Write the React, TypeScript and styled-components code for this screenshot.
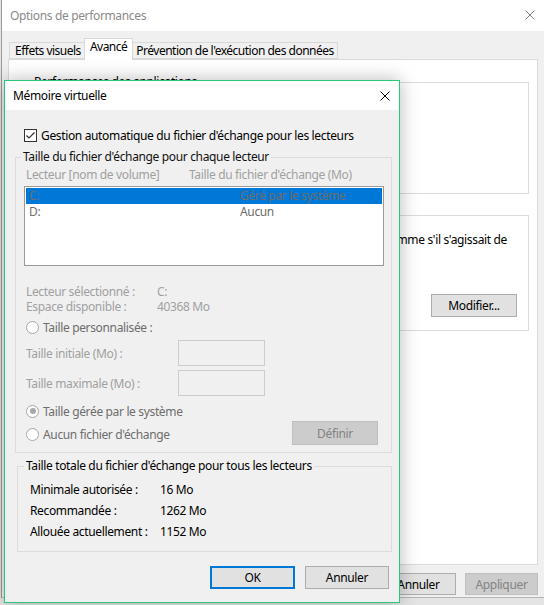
import styled, {createGlobalStyle} from "styled-components";

const GlobalStyle = createGlobalStyle`
    html, body {
        margin: 0;
        padding: 0;
    }
    body {
        width: 544px;
        height: 605px;
        overflow: hidden;
        background: #e4e4e4;
        font-family: "Noto Sans", "Open Sans", sans-serif;
        font-size: 12px;
        letter-spacing: -0.35px;
        color: #000;
    }
`;

const CloseIcon = ({color}: {color: string}) => (
    <svg width="10" height="10" viewBox="0 0 10 10">
        <path d="M0.5 0.5 L9.5 9.5 M9.5 0.5 L0.5 9.5" stroke={color} strokeWidth="1" fill="none"/>
    </svg>
);

const App = () => {
    return (
        <Screen>
            <GlobalStyle/>
            <PerfWindow>
                <WinTitle>
                    <span>Options de performances</span>
                    <CloseIcon color="#808080"/>
                </WinTitle>
                <WinBody>
                    <TabStrip>
                        <Tab>Effets visuels</Tab>
                        <Tab $active>Avancé</Tab>
                        <Tab>Prévention de l'exécution des données</Tab>
                    </TabStrip>
                    <TabPanel>
                        <BgGroup $h={120}>
                            <legend>Performances des applications</legend>
                            <BgText>Ajuster pour obtenir les meilleures performances de :</BgText>
                        </BgGroup>
                        <BgGroup $h={124} $top={13}>
                            <legend>Mémoire virtuelle</legend>
                            <BgLine>
                                <span>Une zone de fichier d'échange est une zone du disque dur que Windows utilise comme s'il s'agissait de</span>
                            </BgLine>
                            <BgText>RAM.</BgText>
                            <BgFoot>
                                <span>Taille totale du fichier d'échange pour tous les lecteurs : 1152 Mo</span>
                                <WinButton $w={86} $h={23}>Modifier...</WinButton>
                            </BgFoot>
                        </BgGroup>
                    </TabPanel>
                    <WinActions>
                        <WinButton $w={75} $h={22}>OK</WinButton>
                        <WinButton $w={75} $h={22}>Annuler</WinButton>
                        <WinButton $w={73} $h={22} $disabled>Appliquer</WinButton>
                    </WinActions>
                </WinBody>
            </PerfWindow>

            <Dialog>
                <DlgTitle>
                    <span>Mémoire virtuelle</span>
                    <CloseIcon color="#000"/>
                </DlgTitle>
                <DlgBody>
                    <CheckRow>
                        <CheckBox>
                            <svg width="11" height="11" viewBox="0 0 11 11">
                                <path d="M1.5 5.5 L4 8 L9.5 2.5" stroke="#333" strokeWidth="1.2" fill="none"/>
                            </svg>
                        </CheckBox>
                        <span>Gestion automatique du fichier d'échange pour les lecteurs</span>
                    </CheckRow>

                    <Group>
                        <legend>Taille du fichier d'échange pour chaque lecteur</legend>
                        <ColumnHead>
                            <span>Lecteur [nom de volume]</span>
                            <span>Taille du fichier d'échange (Mo)</span>
                        </ColumnHead>
                        <ListBox>
                            <ListRow $selected>
                                <span>C:</span>
                                <span>Géré par le système</span>
                            </ListRow>
                            <ListRow>
                                <span>D:</span>
                                <span>Aucun</span>
                            </ListRow>
                        </ListBox>
                        <InfoGrid>
                            <span>Lecteur sélectionné :</span>
                            <span>C:</span>
                            <span>Espace disponible :</span>
                            <span>40368 Mo</span>
                        </InfoGrid>
                        <RadioRow $top={5}>
                            <Radio/>
                            <span>Taille personnalisée :</span>
                        </RadioRow>
                        <SizeRow $top={5}>
                            <span>Taille initiale (Mo) :</span>
                            <SizeInput/>
                        </SizeRow>
                        <SizeRow $top={4}>
                            <span>Taille maximale (Mo) :</span>
                            <SizeInput/>
                        </SizeRow>
                        <ChoiceArea>
                            <ChoiceList>
                                <RadioRow>
                                    <Radio $checked/>
                                    <span>Taille gérée par le système</span>
                                </RadioRow>
                                <RadioRow>
                                    <Radio/>
                                    <span>Aucun fichier d'échange</span>
                                </RadioRow>
                            </ChoiceList>
                            <WinButton $w={86} $h={24} $disabled>Définir</WinButton>
                        </ChoiceArea>
                    </Group>

                    <TotalGroup>
                        <legend>Taille totale du fichier d'échange pour tous les lecteurs</legend>
                        <TotalGrid>
                            <span>Minimale autorisée :</span>
                            <span>16 Mo</span>
                            <span>Recommandée :</span>
                            <span>1262 Mo</span>
                            <span>Allouée actuellement :</span>
                            <span>1152 Mo</span>
                        </TotalGrid>
                    </TotalGroup>

                    <DlgActions>
                        <WinButton $w={85} $h={23} $default>OK</WinButton>
                        <WinButton $w={84} $h={23}>Annuler</WinButton>
                    </DlgActions>
                </DlgBody>
            </Dialog>
        </Screen>
    );
}

const Screen = styled.div`
    position: relative;
    width: 544px;
    height: 605px;
    overflow: hidden;
`;

const PerfWindow = styled.div`
    width: 543px;
    height: 598px;
    margin-left: 1px;
    border-left: 1px solid #9a9a9a;
    box-sizing: border-box;
    display: flex;
    flex-direction: column;
    background: #f0f0f0;
    border-bottom: 1px solid #b5b5b5;
`;

const WinTitle = styled.div`
    height: 31px;
    flex-shrink: 0;
    background: #fff;
    display: flex;
    align-items: center;
    justify-content: space-between;
    padding: 0 9px 0 8px;
    color: #8a8a8a;
    svg {
        margin-bottom: 1px;
    }
`;

const WinBody = styled.div`
    flex: 1;
    display: flex;
    flex-direction: column;
    padding: 7px 6px 0 6px;
`;

const TabStrip = styled.div`
    display: flex;
    align-items: flex-end;
    height: 21px;
    padding-left: 1px;
    position: relative;
    z-index: 1;
`;

const Tab = styled.div<{$active?: boolean}>`
    height: ${p => p.$active ? 22 : 17}px;
    padding: 0 ${p => p.$active ? 5 : 3}px;
    margin-left: -1px;
    margin-bottom: ${p => p.$active ? -1 : 0}px;
    box-sizing: border-box;
    border: 1px solid #d9d9d9;
    border-bottom: ${p => p.$active ? "none" : "1px solid #d9d9d9"};
    background: ${p => p.$active ? "#fff" : "#f0f0f0"};
    display: flex;
    align-items: ${p => p.$active ? "flex-start" : "center"};
    line-height: 16px;
    letter-spacing: -0.5px;
    white-space: nowrap;
    &:first-child {
        margin-left: 0;
        padding-left: 5px;
    }
`;

const TabPanel = styled.div`
    height: 506px;
    box-sizing: border-box;
    background: #fff;
    border: 1px solid #d9d9d9;
    padding: 14px 8px 0 11px;
`;

const BgGroup = styled.fieldset<{$h: number; $top?: number}>`
    height: ${p => p.$h}px;
    box-sizing: border-box;
    margin: ${p => p.$top || 0}px 0 0 0;
    padding: 0 11px 0 11px;
    border: 1px solid #dcdcdc;
    min-width: 0;
    legend {
        padding: 0 2px;
        margin-left: 0;
        line-height: 16px;
    }
`;

const BgText = styled.div`
    line-height: 16px;
`;

const BgLine = styled.div`
    margin-top: 9px;
    padding-right: 10px;
    line-height: 16px;
    white-space: nowrap;
    display: flex;
    justify-content: flex-end;
    overflow: hidden;
    span {
        flex-shrink: 0;
    }
`;

const BgFoot = styled.div`
    margin-top: 30px;
    display: flex;
    align-items: center;
    justify-content: space-between;
    white-space: nowrap;
`;

const WinButton = styled.div<{$w: number; $h: number; $disabled?: boolean; $default?: boolean}>`
    width: ${p => p.$w}px;
    height: ${p => p.$h}px;
    box-sizing: border-box;
    flex-shrink: 0;
    display: flex;
    align-items: center;
    justify-content: center;
    background: ${p => p.$disabled ? "#cccccc" : "#e1e1e1"};
    border: ${p => p.$default ? "2px solid #0078d7" : p.$disabled ? "1px solid #bfbfbf" : "1px solid #adadad"};
    color: ${p => p.$disabled ? "#838383" : "#000"};
`;

const WinActions = styled.div`
    display: flex;
    justify-content: flex-end;
    gap: 9px;
    margin-top: 8px;
`;

const Dialog = styled.div`
    position: absolute;
    left: 4px;
    top: 80px;
    width: 396px;
    height: 523px;
    box-sizing: border-box;
    border: 1px solid #29c77b;
    background: #f0f0f0;
    box-shadow: 0 0 18px rgba(0, 0, 0, 0.28);
    display: flex;
    flex-direction: column;
`;

const DlgTitle = styled.div`
    height: 29px;
    flex-shrink: 0;
    background: #fff;
    display: flex;
    align-items: center;
    justify-content: space-between;
    padding: 0 9px 0 8px;
`;

const DlgBody = styled.div`
    flex: 1;
    display: flex;
    flex-direction: column;
    padding: 17px 7px 0 10px;
`;

const CheckRow = styled.div`
    height: 16px;
    margin-left: 9px;
    display: flex;
    align-items: center;
    gap: 4px;
`;

const CheckBox = styled.div`
    width: 13px;
    height: 13px;
    box-sizing: border-box;
    border: 1px solid #333;
    background: #fff;
    display: flex;
    align-items: center;
    justify-content: center;
`;

const Group = styled.fieldset`
    margin: 6px 0 0 0;
    padding: 0 0 7px 0;
    border: 1px solid #dcdcdc;
    min-width: 0;
    legend {
        padding: 0 2px;
        margin-left: 5px;
        line-height: 16px;
        color: #111;
    }
`;

const ColumnHead = styled.div`
    display: grid;
    grid-template-columns: 163px 1fr;
    height: 16px;
    line-height: 16px;
    margin-top: 2px;
    padding-left: 10px;
    color: #a0a0a0;
    white-space: nowrap;
`;

const ListBox = styled.div`
    width: 360px;
    height: 80px;
    box-sizing: border-box;
    margin: 3px 0 0 8px;
    padding: 1px;
    border: 1px solid #9a9a9a;
    background: #fff;
`;

const ListRow = styled.div<{$selected?: boolean}>`
    display: grid;
    grid-template-columns: 211px 1fr;
    height: 16px;
    line-height: 16px;
    padding-left: 3px;
    background: ${p => p.$selected ? "#0078d7" : "transparent"};
    color: #6d6d6d;
`;

const InfoGrid = styled.div`
    display: grid;
    grid-template-columns: 131px 1fr;
    grid-auto-rows: 15px;
    line-height: 15px;
    margin-top: 18px;
    padding-left: 10px;
    color: #a0a0a0;
`;

const RadioRow = styled.div<{$top?: number}>`
    height: 16px;
    margin-top: ${p => p.$top || 0}px;
    padding-left: 10px;
    display: flex;
    align-items: center;
    gap: 4px;
    color: #6d6d6d;
`;

const Radio = styled.div<{$checked?: boolean}>`
    width: 13px;
    height: 13px;
    box-sizing: border-box;
    border-radius: 50%;
    border: 1px solid #a8a8a8;
    background: #fff;
    display: flex;
    align-items: center;
    justify-content: center;
    &::after {
        content: "";
        width: 6px;
        height: 6px;
        border-radius: 50%;
        background: ${p => p.$checked ? "#a8a8a8" : "transparent"};
    }
`;

const SizeRow = styled.div<{$top: number}>`
    display: grid;
    grid-template-columns: 152px 87px;
    align-items: center;
    margin-top: ${p => p.$top}px;
    padding-left: 10px;
    color: #a0a0a0;
`;

const SizeInput = styled.div`
    height: 26px;
    box-sizing: border-box;
    border: 1px solid #cccccc;
    background: #f0f0f0;
`;

const ChoiceArea = styled.div`
    display: flex;
    justify-content: space-between;
    padding-right: 13px;
    margin-top: 7px;
    & > ${WinButton} {
        margin-top: 18px;
    }
`;

const ChoiceList = styled.div`
    display: flex;
    flex-direction: column;
    gap: 7px;
`;

const TotalGroup = styled.fieldset`
    margin: 5px 0 0 2px;
    padding: 0 0 9px 0;
    border: 1px solid #dcdcdc;
    min-width: 0;
    legend {
        padding: 0 2px;
        margin-left: 6px;
        line-height: 16px;
    }
`;

const TotalGrid = styled.div`
    display: grid;
    grid-template-columns: 130px 1fr;
    grid-auto-rows: 21px;
    align-items: center;
    margin-top: 5px;
    padding-left: 12px;
`;

const DlgActions = styled.div`
    display: flex;
    justify-content: flex-end;
    gap: 10px;
    margin: 14px 3px 0 0;
`;

export default App;
